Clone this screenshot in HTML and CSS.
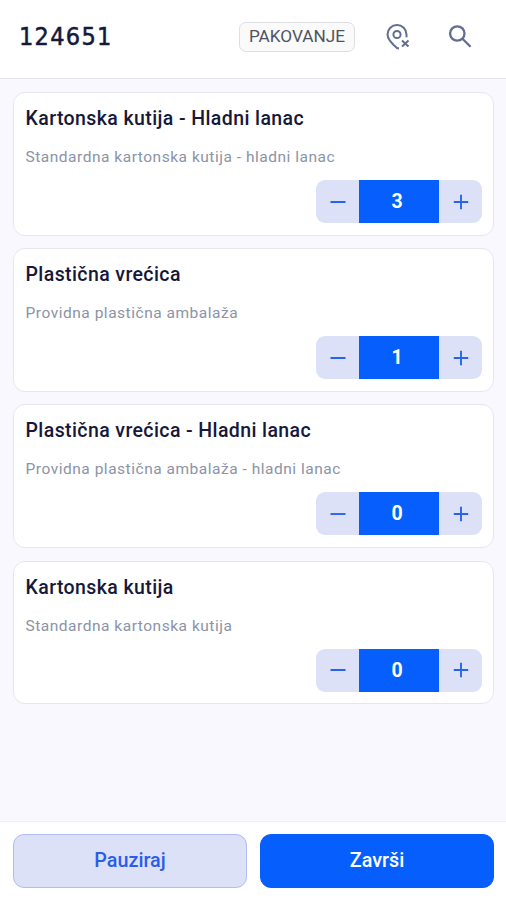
FILE: index.html
```html
<!DOCTYPE html>
<html lang="sr-Latn">
<head>
<meta charset="utf-8">
<title>Pakovanje</title>
<link rel="stylesheet" href="styles.css">
</head>
<body>
<svg width="0" height="0" class="defs">
  <symbol id="minus" viewBox="0 0 16 16"><path d="M.5 8h15"/></symbol>
  <symbol id="plus" viewBox="0 0 16 16"><path d="M.8 8h14.4M8 .8v14.4"/></symbol>
</svg>
<header class="top">
  <h1 class="order">124651</h1>
  <span class="badge">PAKOVANJE</span>
  <button class="icon pin" aria-label="Lokacija"><svg width="26" height="28" viewBox="0 0 26 28"><path d="M14 25.200h-1.800C6 20 2.500 16 2.500 11.500a9.500 9.500 0 0 1 19 0v2.700"/><circle cx="12" cy="11.500" r="3.600"/><path d="m17 17.400 6.500 6M23.500 17.400l-6.500 6"/></svg></button>
  <button class="icon search" aria-label="Pretraga"><svg width="26" height="26" viewBox="0 0 26 26"><circle cx="10.300" cy="9.500" r="7.200"/><path d="m15.500 14.700 8 8"/></svg></button>
</header>
<main class="list">
  <article class="card">
    <h2 class="name">Kartonska kutija - Hladni lanac</h2>
    <p class="desc">Standardna kartonska kutija - hladni lanac</p>
    <div class="stepper"><button class="step"><svg><use href="#minus"/></svg></button><span class="count">3</span><button class="step"><svg><use href="#plus"/></svg></button></div>
  </article>
  <article class="card">
    <h2 class="name">Plastična vrećica</h2>
    <p class="desc">Providna plastična ambalaža</p>
    <div class="stepper"><button class="step"><svg><use href="#minus"/></svg></button><span class="count">1</span><button class="step"><svg><use href="#plus"/></svg></button></div>
  </article>
  <article class="card">
    <h2 class="name">Plastična vrećica - Hladni lanac</h2>
    <p class="desc">Providna plastična ambalaža - hladni lanac</p>
    <div class="stepper"><button class="step"><svg><use href="#minus"/></svg></button><span class="count">0</span><button class="step"><svg><use href="#plus"/></svg></button></div>
  </article>
  <article class="card">
    <h2 class="name">Kartonska kutija</h2>
    <p class="desc">Standardna kartonska kutija</p>
    <div class="stepper"><button class="step"><svg><use href="#minus"/></svg></button><span class="count">0</span><button class="step"><svg><use href="#plus"/></svg></button></div>
  </article>
</main>
<footer class="actions">
  <button class="btn secondary">Pauziraj</button>
  <button class="btn primary">Završi</button>
</footer>
</body>
</html>
```
FILE: styles.css
```css
* { box-sizing: border-box; }
body {
  margin: 0;
  height: 900px;
  display: flex;
  flex-direction: column;
  background: #f8f8fe;
  font-family: Roboto, "Liberation Sans", sans-serif;
  color: #15183a;
}
.defs { position: absolute; }
h1, h2, p { margin: 0; }
button { border: 0; padding: 0; background: none; font: inherit; color: inherit; }
svg { display: block; fill: none; stroke: currentColor; }
.top {
  height: 79px;
  padding: 0 33px 5px 19px;
  display: flex;
  align-items: center;
  background: #fff;
  border-bottom: 1px solid #e6e6f2;
}
.order {
  flex: 1;
  font: 400 25px/32px "DejaVu Sans Condensed", "DejaVu Sans", sans-serif;
  font-stretch: condensed;
  letter-spacing: 1.3px;
  -webkit-text-stroke: 0.5px;
}
.badge {
  width: 116px;
  height: 30px;
  border: 1px solid #dedee2;
  border-radius: 7px;
  background: #fafafa;
  color: #50535e;
  font-size: 17.2px;
  line-height: 27px;
  text-align: center;
}
.icon { color: #626c94; stroke-width: 2; }
.pin { margin-left: 30px; }
.search { margin-left: 36px; stroke-width: 2.3; }
.list {
  flex: 1;
  padding: 13px 12px 0 13px;
  display: flex;
  flex-direction: column;
  gap: 12.7px;
}
.card {
  height: 143.5px;
  padding: 12px 11px 0 12px;
  background: #fff;
  border: 1px solid #e6e6f1;
  border-radius: 12px;
}
.name { margin-left: -0.5px; font-size: 19.5px; font-weight: 500; line-height: 27px; letter-spacing: 0.4px; }
.desc { margin: 14px 0 0 -0.5px; color: #8b93a7; font-size: 15.5px; line-height: 22px; letter-spacing: 0.52px; }
.stepper {
  width: 166px;
  height: 43px;
  margin: 12px 0 0 auto;
  display: flex;
  border-radius: 9px;
  overflow: hidden;
  background: #dde1f8;
}
.step { flex: 1; display: flex; align-items: center; justify-content: center; color: #2864ea; }
.step svg { width: 16px; height: 16px; stroke-width: 1.9; }
.count { width: 80px; background: #065ffc; color: #fff; font-size: 19.5px; font-weight: 700; line-height: 44px; text-align: center; padding-right: 4px; }
.actions {
  height: 79px;
  padding: 12px 12px 12px 13px;
  display: flex;
  gap: 13px;
  background: #fff;
  border-top: 1px solid #f0f0f7;
}
.btn { flex: 1; padding-bottom: 2px; border: 1px solid #aebcf8; border-radius: 11px; font-size: 19.8px; font-weight: 500; }
.secondary { background: #dde1f8; color: #2a5dec; }
.primary { background: #065ffc; border-color: #065ffc; color: #fff; }
```
